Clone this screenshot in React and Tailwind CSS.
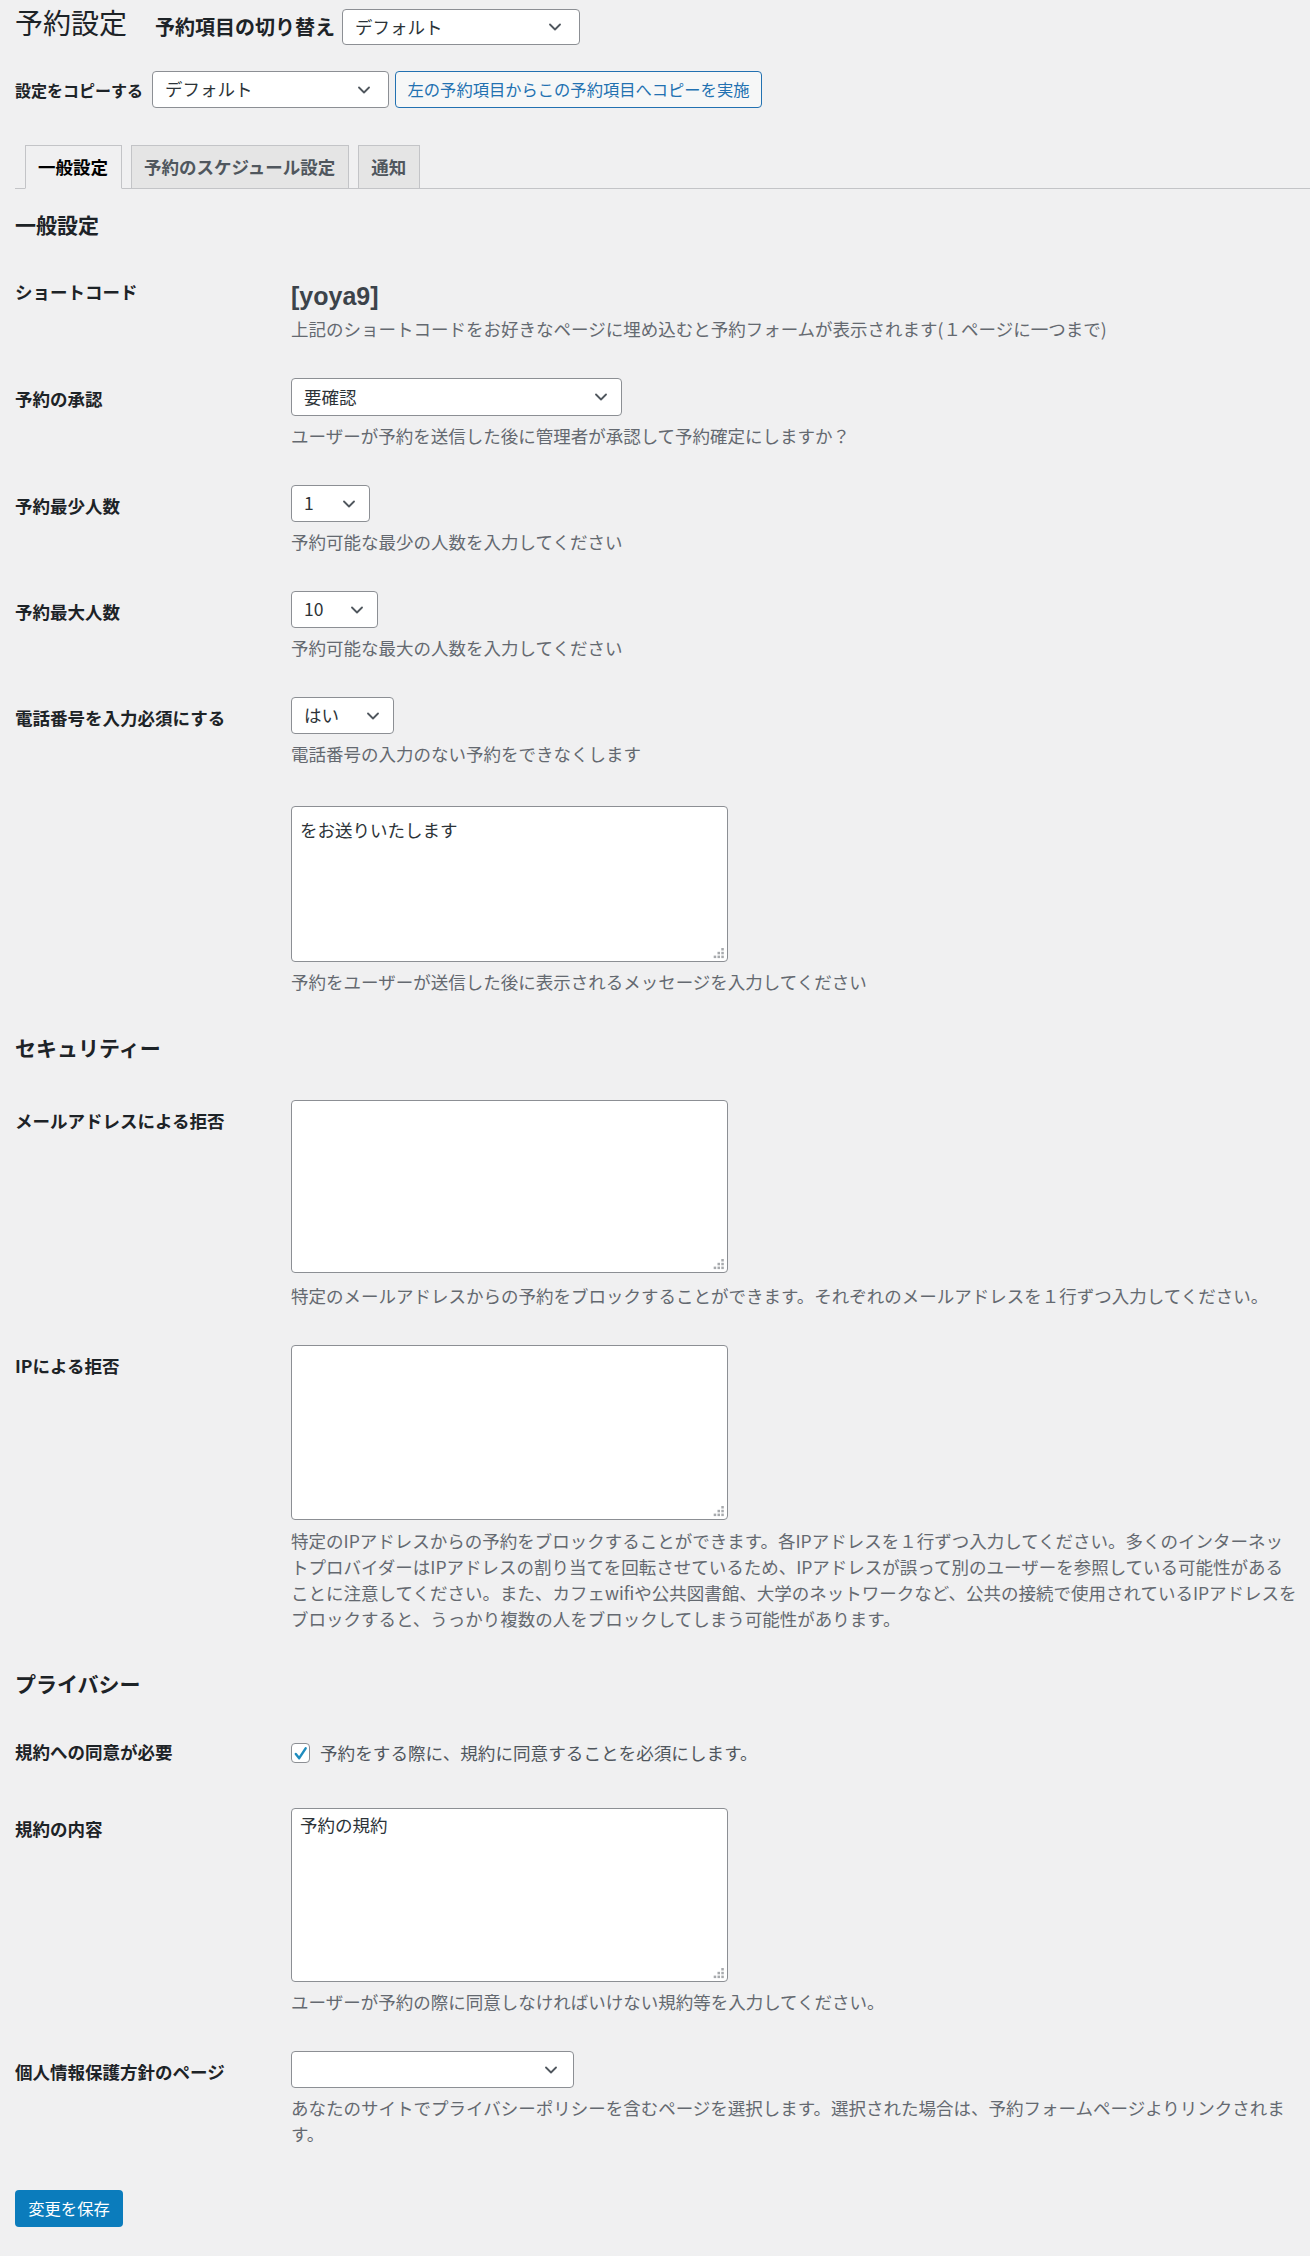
import React from 'react';

const Chevron = () => (
  <svg width="12" height="8" viewBox="0 0 12 8" fill="none" className="shrink-0">
    <path d="M1 1.5l5 5 5-5" stroke="#50575e" strokeWidth="1.8" strokeLinecap="round" strokeLinejoin="round" />
  </svg>
);

const Select = ({ value = '', className = '' }) => (
  <div className={`flex items-center justify-between bg-white border border-[#8c8f94] rounded-[4px] pl-[12px] pr-[14px] text-[17.5px] text-[#2c3338] ${className}`}>
    <span>{value}</span>
    <Chevron />
  </div>
);

const Grip = () => (
  <svg width="12" height="12" viewBox="0 0 12 12" className="absolute right-[3px] bottom-[2px]">
    <rect x="9.3" y="1" width="2.5" height="2.5" fill="#a7aaad" />
    <rect x="5.5" y="4.8" width="2.5" height="2.5" fill="#a7aaad" />
    <rect x="9.3" y="4.8" width="2.5" height="2.5" fill="#a7aaad" />
    <rect x="1.7" y="8.6" width="2.5" height="2.5" fill="#a7aaad" />
    <rect x="5.5" y="8.6" width="2.5" height="2.5" fill="#a7aaad" />
    <rect x="9.3" y="8.6" width="2.5" height="2.5" fill="#a7aaad" />
  </svg>
);

const TextBox = ({ value = '', className = '', pad = 'pt-[10px]' }) => (
  <div className={`relative w-[437px] bg-white border border-[#8c8f94] rounded-[4px] ${className}`}>
    <div className={`px-[8px] ${pad} text-[17.5px] leading-[26px] text-[#2c3338]`}>{value}</div>
    <Grip />
  </div>
);

const Desc = ({ children, className = 'mt-[7px]' }) => (
  <p className={`text-[17.5px] leading-[26px] text-[#646970] ${className}`}>{children}</p>
);

const Row = ({ label, children, tdClass = 'py-[18px]' }) => (
  <div className="grid grid-cols-[276px_1fr]">
    <div className="pt-[26px] text-[17.5px] leading-[26px] font-semibold text-[#1d2327]">{label}</div>
    <div className={tdClass}>{children}</div>
  </div>
);

const Heading = ({ children, className }) => (
  <h2 className={`text-[21px] leading-[30px] font-semibold text-[#1d2327] ${className}`}>{children}</h2>
);

export default function App() {
  return (
    <div className="min-h-screen bg-[#f0f0f1] font-['Noto_Sans_CJK_JP','Noto_Sans',sans-serif] pb-[27px]">
      {/* header */}
      <div className="pl-[15px] flex items-start">
        <h1 className="mt-[6px] text-[28px] leading-[32px] font-normal text-[#1d2327]">予約設定</h1>
        <span className="ml-[28px] mt-[14px] text-[20px] leading-[26px] font-semibold text-[#1d2327]">予約項目の切り替え</span>
        <Select value="デフォルト" className="ml-[7px] mt-[9px] w-[238px] h-[36px] pr-[18px]" />
      </div>

      <div className="pl-[15px] mt-[26px] flex items-center">
        <span className="text-[16px] font-semibold text-[#1d2327]">設定をコピーする</span>
        <Select value="デフォルト" className="ml-[9px] w-[237px] h-[37px] pr-[18px]" />
        <button className="ml-[6px] w-[367px] h-[37px] rounded-[4px] border border-[#2271b1] bg-[#f6f7f7] text-[#2271b1] text-[16.3px]">
          左の予約項目からこの予約項目へコピーを実施
        </button>
      </div>

      {/* tabs */}
      <div className="ml-[15px] mt-[37px] flex gap-[9px] pl-[9.5px] border-b border-[#c3c4c7] h-[44px]">
        <div className="-mb-px h-[44px] px-[12.5px] flex items-center border border-[#c3c4c7] border-b-[#f0f0f1] bg-[#f0f0f1] text-[17.5px] font-semibold text-black">一般設定</div>
        <div className="-mb-px h-[44px] px-[12.5px] flex items-center border border-[#c3c4c7] bg-[#e5e5e5] text-[17.5px] font-semibold text-[#50575e]">予約のスケジュール設定</div>
        <div className="-mb-px h-[44px] px-[12.5px] flex items-center border border-[#c3c4c7] bg-[#e5e5e5] text-[17.5px] font-semibold text-[#50575e]">通知</div>
      </div>

      <div className="pl-[15px] pr-[12px]">
        <Heading className="mt-[20px] mb-[14px]">一般設定</Heading>

        <Row label="ショートコード">
          <div className="pt-[10px] text-[25px] leading-[30px] font-bold text-[#3c434a] font-['Liberation_Sans',sans-serif]">[yoya9]</div>
          <Desc className="mt-[5px]">上記のショートコードをお好きなページに埋め込むと予約フォームが表示されます(１ページに一つまで)</Desc>
        </Row>

        <Row label="予約の承認">
          <Select value="要確認" className="w-[331px] h-[38px] pr-[14px]" />
          <Desc>ユーザーが予約を送信した後に管理者が承認して予約確定にしますか？</Desc>
        </Row>

        <Row label="予約最少人数">
          <Select value="1" className="w-[79px] h-[37px]" />
          <Desc>予約可能な最少の人数を入力してください</Desc>
        </Row>

        <Row label="予約最大人数">
          <Select value="10" className="w-[87px] h-[37px]" />
          <Desc>予約可能な最大の人数を入力してください</Desc>
        </Row>

        <Row label="電話番号を入力必須にする">
          <Select value="はい" className="w-[103px] h-[37px]" />
          <Desc>電話番号の入力のない予約をできなくします</Desc>
        </Row>

        <Row label="" tdClass="pt-[21px] pb-[18px]">
          <TextBox value="をお送りいたします" className="h-[156px]" />
          <Desc>予約をユーザーが送信した後に表示されるメッセージを入力してください</Desc>
        </Row>

        <Heading className="mt-[19px] mb-[20px]">セキュリティー</Heading>

        <Row label="メールアドレスによる拒否">
          <TextBox className="h-[173px]" />
          <Desc className="mt-[10px]">特定のメールアドレスからの予約をブロックすることができます。それぞれのメールアドレスを１行ずつ入力してください。</Desc>
        </Row>

        <Row label="IPによる拒否">
          <TextBox className="h-[175px]" />
          <Desc className="mt-[8px]">特定のIPアドレスからの予約をブロックすることができます。各IPアドレスを１行ずつ入力してください。多くのインターネットプロバイダーはIPアドレスの割り当てを回転させているため、IPアドレスが誤って別のユーザーを参照している可能性があることに注意してください。また、カフェwifiや公共図書館、大学のネットワークなど、公共の接続で使用されているIPアドレスをブロックすると、うっかり複数の人をブロックしてしまう可能性があります。</Desc>
        </Row>

        <Heading className="mt-[18px] mb-[15px]">プライバシー</Heading>

        <Row label="規約への同意が必要" tdClass="pt-[27px] pb-[24px]">
          <label className="flex items-center h-[26px] text-[17.6px] text-[#50575e]">
            <span className="w-[19px] h-[20px] mr-[10px] flex items-center justify-center bg-white border border-[#8c8f94] rounded-[4px]">
              <svg width="15" height="15" viewBox="0 0 16 16" fill="none">
                <path d="M3 8.5l3.6 4.5L13.5 2.5" stroke="#1e8cbe" strokeWidth="2.6" strokeLinecap="round" strokeLinejoin="round" />
              </svg>
            </span>
            予約をする際に、規約に同意することを必須にします。
          </label>
        </Row>

        <Row label="規約の内容">
          <TextBox value="予約の規約" className="h-[174px]" pad="pt-[3px]" />
          <Desc>ユーザーが予約の際に同意しなければいけない規約等を入力してください。</Desc>
        </Row>

        <Row label="個人情報保護方針のページ">
          <Select className="w-[283px] h-[37px] pr-[16px]" />
          <Desc>あなたのサイトでプライバシーポリシーを含むページを選択します。選択された場合は、予約フォームページよりリンクされます。</Desc>
        </Row>

        <button className="mt-[25px] w-[108px] h-[37px] rounded-[4px] bg-[#0b7cbc] text-white text-[16.3px]">変更を保存</button>
      </div>
    </div>
  );
}
